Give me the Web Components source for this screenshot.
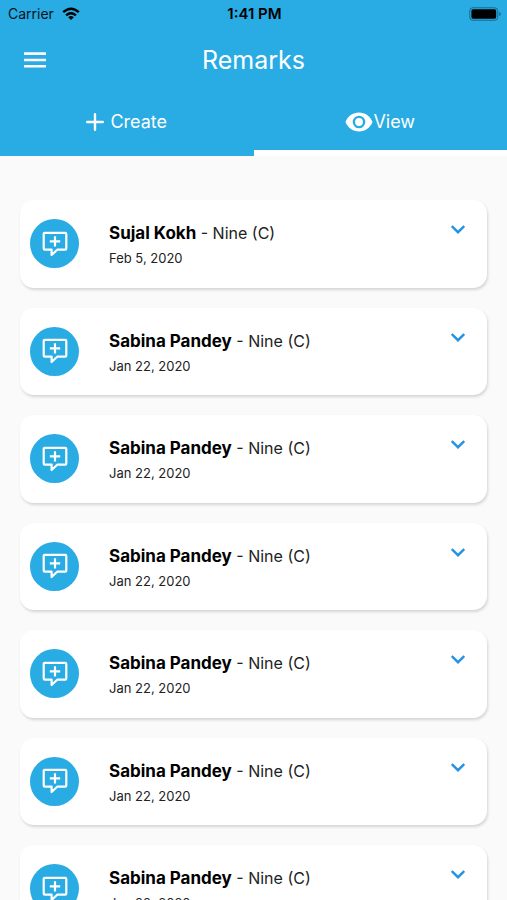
<!DOCTYPE html>
<html lang="en">
<head>
<meta charset="utf-8">
<meta name="viewport" content="width=device-width, initial-scale=1">
<title>Remarks</title>
<style>
  body { margin: 0; background: #fafafa; font-family: Inter, "Liberation Sans", sans-serif; }
</style>
</head>
<body>
<remarks-app></remarks-app>

<script>
const define = (name, html, setup) => {
  const template = document.createElement('template');
  template.innerHTML = html;
  customElements.define(name, class extends HTMLElement {
    constructor() {
      super();
      this.attachShadow({ mode: 'open' }).append(template.content.cloneNode(true));
    }
    connectedCallback() { if (setup) setup(this, this.shadowRoot); }
  });
};

define('status-bar', `
  <style>
    :host { display: grid; grid-template-columns: 1fr auto 1fr; align-items: center; height: 28px; padding: 0 6px 0 8px; color: #06141c; font-size: 14px; line-height: 20px; }
    .carrier { display: flex; align-items: center; gap: 8px; }
    .time { font-size: 15px; font-weight: 600; color: #000; }
    .battery { justify-self: end; }
    svg { display: block; }
  </style>
  <div class="carrier"><span>Carrier</span>
    <svg width="18" height="14" viewBox="0 0 18 14" fill="none" stroke="#000" stroke-width="2.4" aria-hidden="true">
      <path d="M1.2 5.2Q9-1.8 16.8 5.2M4.1 8.3Q9 4 13.9 8.3"/><path d="M6.2 10.2Q9 8 11.8 10.2L9 13Z" fill="#000" stroke="none"/>
    </svg>
  </div>
  <div class="time">1:41 PM</div>
  <svg class="battery" width="32" height="14" viewBox="0 0 32 14" aria-hidden="true">
    <rect x=".8" y=".8" width="28" height="12.4" rx="3" fill="none" stroke="#17688c"/>
    <rect x="2.4" y="2.3" width="24.8" height="9.4" rx="1.6"/>
    <path d="M30.2 5q1.6.6 1.6 2t-1.6 2z" fill="#17688c"/>
  </svg>`);

define('app-bar', `
  <style>
    :host { display: grid; grid-template-columns: 1fr auto 1fr; align-items: center; height: 64px; padding: 0 20px; color: #fff; }
    h1 { margin: 0; font-size: 25px; line-height: 32px; font-weight: 400; }
    button { justify-self: start; display: grid; place-items: center; padding: 4px; border: 0; background: none; color: inherit; }
    svg { display: block; }
  </style>
  <button aria-label="Open menu"><svg width="22" height="16" viewBox="0 0 22 16" fill="currentColor"><path d="M0 .3h22v2.6H0zM0 6.7h22v2.6H0zM0 13h22v2.6H0z"/></svg></button>
  <h1><slot></slot></h1>`);

define('tab-item', `
  <style>
    :host { display: flex; flex: 1; }
    button { flex: 1; display: flex; align-items: center; justify-content: center; padding: 2px 0 0; border: 0; border-bottom: 6px solid transparent; background: none; color: #fff; font: inherit; font-size: 18px; line-height: 24px; }
    :host([selected]) button { border-bottom-color: #fff; }
  </style>
  <button role="tab"><slot name="icon"></slot><slot></slot></button>`,
  (host, root) => root.querySelector('button').setAttribute('aria-selected', host.hasAttribute('selected')));

define('remark-badge', `
  <style>
    :host { display: grid; place-items: center; width: 49px; height: 49px; border-radius: 50%; background: #29abe3; }
    svg { display: block; }
  </style>
  <svg width="26" height="26" viewBox="0 0 26 26" fill="none" stroke="#fff" stroke-width="2.2" stroke-linejoin="round" aria-hidden="true">
    <path d="M2.8 1.8H23.2Q24.3 1.8 24.3 2.9V17.6Q24.3 18.7 23.2 18.7H15.2L9.6 24V18.7H2.8Q1.7 18.7 1.7 17.6V2.9Q1.7 1.8 2.8 1.8Z"/>
    <path d="M13 5.2V15.6M7.8 10.4H18.2"/>
  </svg>`);

define('remark-card', `
  <style>
    :host { display: flex; align-items: flex-start; padding: 0 12px 0 10px; border-radius: 14px; background: #fff; box-shadow: 1px 2px 3px rgba(0, 0, 0, .15); }
    remark-badge { align-self: center; flex: none; }
    .text { flex: 1; display: grid; gap: 4px; padding: 21px 0 19px 30px; }
    h2 { margin: 0; font-size: 16px; line-height: 24px; font-weight: 400; color: #222; }
    ::slotted(strong) { font-size: 17px; font-weight: 700; color: #000; }
    .date { font-size: 13px; line-height: 1.5; color: #222; }
    button { flex: none; display: grid; place-items: center; margin-top: 19px; padding: 6px 10px; border: 0; background: none; color: #2493e5; }
    svg { display: block; }
  </style>
  <remark-badge></remark-badge>
  <div class="text"><h2><slot></slot></h2><div class="date"><slot name="date"></slot></div></div>
  <button aria-label="Show remark" aria-expanded="false"><svg width="14" height="9" viewBox="0 0 14 9" fill="none" stroke="currentColor" stroke-width="2.4"><path d="M.8 1L7 7.2 13.2 1"/></svg></button>`);

define('remarks-app', `
  <style>
    :host { display: flex; flex-direction: column; height: 100vh; overflow: hidden; }
    header { flex: none; background: #29abe3; }
    nav { display: flex; height: 64px; }
    main { flex: 1; min-height: 0; overflow-y: auto; scrollbar-width: none; display: flex; flex-direction: column; gap: 20px; padding: 44px 20px; }
    remark-card { flex: none; }
    .plus { margin-right: 6px; }
    svg { display: block; }
  </style>
  <header>
    <status-bar></status-bar>
    <app-bar>Remarks</app-bar>
    <nav role="tablist">
      <tab-item><svg class="plus" slot="icon" width="18" height="18" viewBox="0 0 18 18" stroke="#fff" stroke-width="2.4" stroke-linecap="round" aria-hidden="true"><path d="M9 1.2V16.800M1.2 9H16.8"/></svg>Create</tab-item>
      <tab-item selected><svg slot="icon" width="28" height="20" viewBox="0 0 28 20" aria-hidden="true"><path fill="#fff" fill-rule="evenodd" d="M14 .6C7.8.6 2.6 4.4.5 10 2.6 15.6 7.8 19.4 14 19.4S25.4 15.6 27.5 10C25.4 4.4 20.2.6 14 .6ZM14 3.7A6.3 6.3 0 1 1 14 16.3A6.3 6.3 0 0 1 14 3.7Z"/><circle cx="14" cy="10" r="3.9" fill="#fff"/></svg>View</tab-item>
    </nav>
  </header>
  <main>
    <remark-card><strong>Sujal Kokh</strong> - Nine (C)<span slot="date">Feb 5, 2020</span></remark-card>
    <remark-card><strong>Sabina Pandey</strong> - Nine (C)<span slot="date">Jan 22, 2020</span></remark-card>
    <remark-card><strong>Sabina Pandey</strong> - Nine (C)<span slot="date">Jan 22, 2020</span></remark-card>
    <remark-card><strong>Sabina Pandey</strong> - Nine (C)<span slot="date">Jan 22, 2020</span></remark-card>
    <remark-card><strong>Sabina Pandey</strong> - Nine (C)<span slot="date">Jan 22, 2020</span></remark-card>
    <remark-card><strong>Sabina Pandey</strong> - Nine (C)<span slot="date">Jan 22, 2020</span></remark-card>
    <remark-card><strong>Sabina Pandey</strong> - Nine (C)<span slot="date">Jan 22, 2020</span></remark-card>
  </main>`);
</script>
</body>
</html>
